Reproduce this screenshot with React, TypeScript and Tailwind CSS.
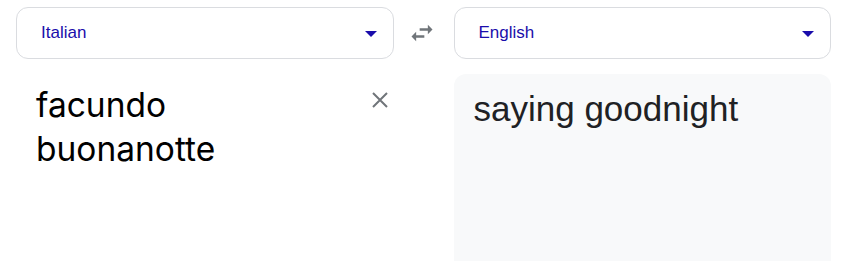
function LangSelect({ label }: { label: string }) {
  return (
    <div className="flex h-[52px] flex-1 items-center justify-between rounded-xl border border-[#dadce0] bg-white pl-[24px] pr-[16px]">
      <span className="text-[17px] text-[#1a0dab]" style={{ fontFamily: '"Liberation Sans", Arial, sans-serif' }}>
        {label}
      </span>
      <svg width="12" height="6" viewBox="0 0 12 6" className="mt-[2px]">
        <path d="M0 0h12L6 6z" fill="#1a0dab" />
      </svg>
    </div>
  );
}

export default function App() {
  return (
    <main className="h-[261px] w-full overflow-hidden bg-white pl-4 pr-[30px] pt-[7px]">
      <div className="flex items-center">
        <LangSelect label="Italian" />
        <div className="flex w-[60px] items-center justify-center">
          <svg width="28" height="28" viewBox="0 0 24 24" fill="#70757a" className="-ml-[3px]">
            <path d="M6.99 11L3 15l3.99 4v-3H14v-2H6.99v-3zM21 9l-3.99-4v3H10v2h7.01v3L21 9z" />
          </svg>
        </div>
        <LangSelect label="English" />
      </div>

      <div className="mt-[15px] flex">
        <div className="flex flex-1 items-start justify-between pl-5 pt-[9px]">
          <p
            className="text-[33.5px] leading-[44px] text-[#000]"
            style={{ fontFamily: 'Inter, "Open Sans", sans-serif' }}
          >
            facundo
            <br />
            buonanotte
          </p>
          <svg width="24" height="24" viewBox="0 0 24 24" className="mt-[5px] mr-[2px]">
            <path d="M5 5l14 14M19 5L5 19" stroke="#70757a" strokeWidth="2" />
          </svg>
        </div>
        <div className="w-[60px]" />
        <div className="h-[200px] flex-1 rounded-xl bg-[#f8f9fa] pl-5 pt-[14px]">
          <p
            className="text-[35px] leading-[42px] text-[#202124]"
            style={{ fontFamily: '"Liberation Sans", Arial, sans-serif' }}
          >
            saying goodnight
          </p>
        </div>
      </div>
    </main>
  );
}
